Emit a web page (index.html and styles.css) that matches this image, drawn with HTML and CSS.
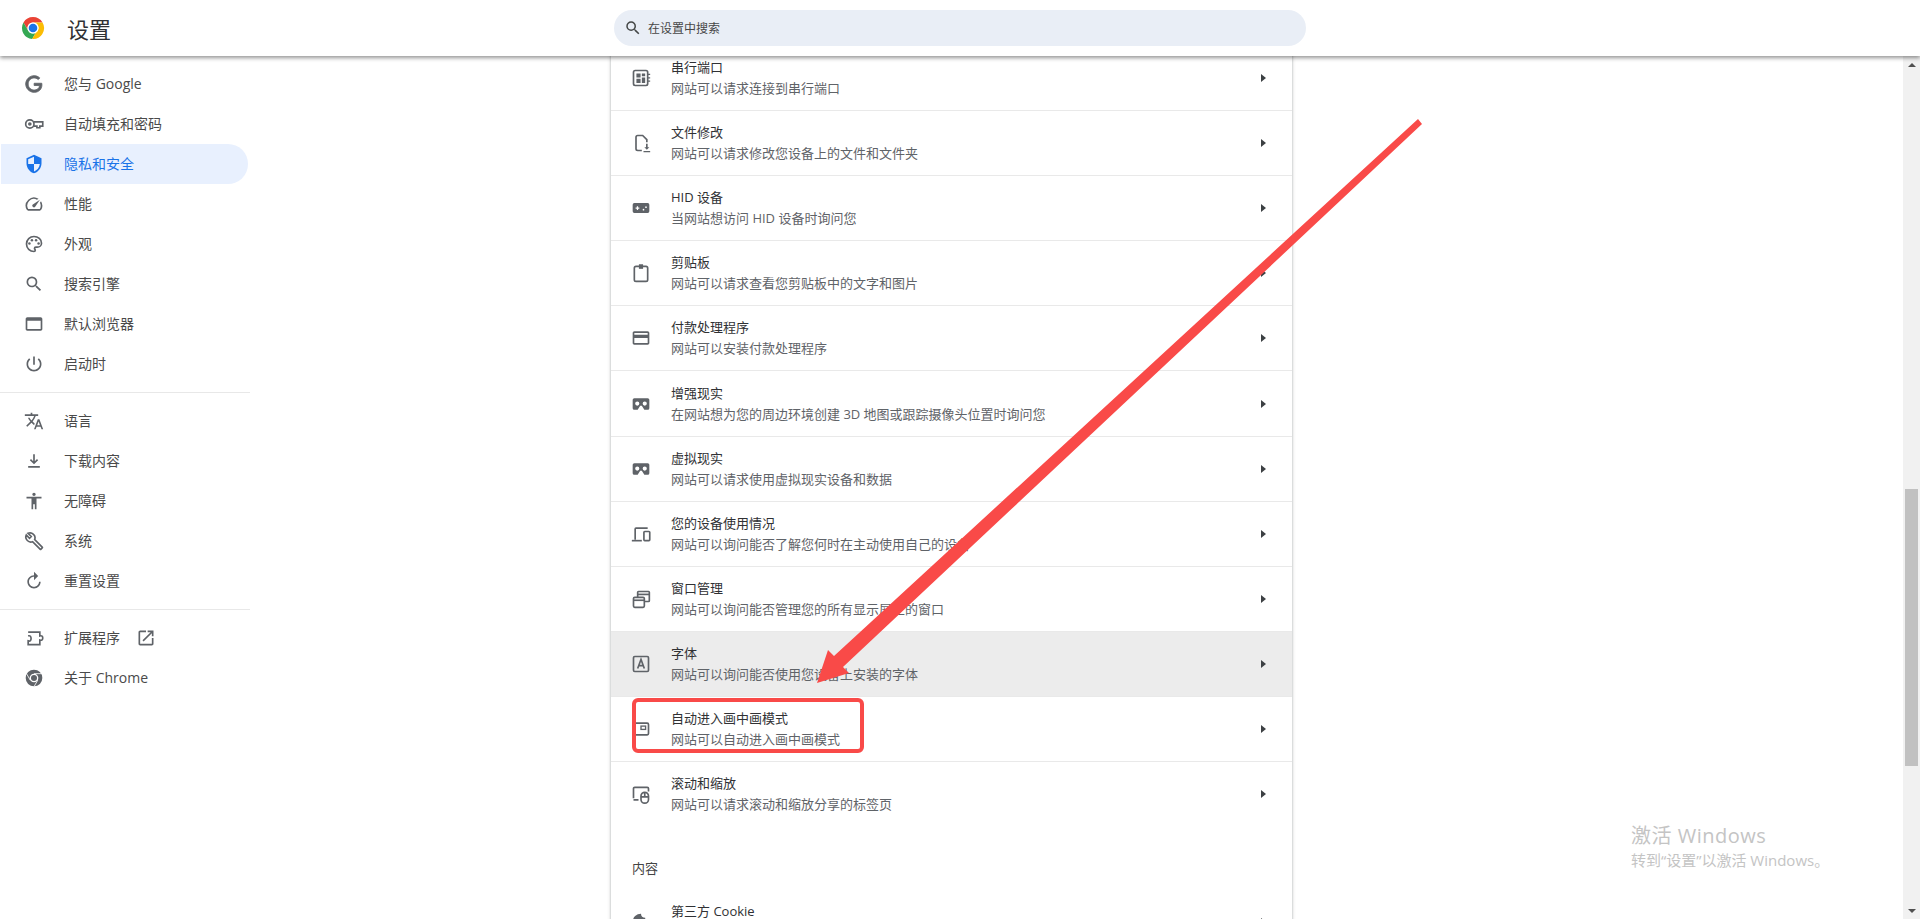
FILE: index.html
```html
<!DOCTYPE html>
<html lang="zh-CN">
<head>
  <meta charset="UTF-8" />
  <title>设置</title>
  <link rel="stylesheet" href="styles.css">
</head>
<body>
  <header class="topbar">
    <div class="brand">
      <svg class="logo" viewBox="0 0 24 24">
        <path fill="#ea4335" d="M2.47 6.5A11 11 0 0 1 21.53 6.5H12A5.5 5.5 0 0 0 7.24 14.75Z"/>
        <path fill="#34a853" d="M2.47 6.5L7.24 14.75A5.5 5.5 0 0 0 14.76 16.76L11.16 23A11 11 0 0 1 2.47 6.5Z"/>
        <path fill="#fbbc04" d="M21.53 6.5H12A5.5 5.5 0 0 1 14.76 16.76L11.16 23A11 11 0 0 0 21.53 6.5Z"/>
        <circle cx="12" cy="12" r="5.5" fill="#fff"/>
        <circle cx="12" cy="12" r="4.3" fill="#1a73e8"/>
      </svg>
      <h1 class="title">设置</h1>
    </div>
    <div class="search">
      <svg class="search-icon" viewBox="0 0 24 24"><path d="M15.5 14h-.79l-.28-.27A6.471 6.471 0 0 0 16 9.5 6.5 6.5 0 1 0 9.5 16c1.61 0 3.09-.59 4.23-1.57l.27.28v.79l5 4.99L20.49 19l-4.99-5zm-6 0C7.01 14 5 11.99 5 9.5S7.01 5 9.5 5 14 7.01 14 9.5 11.99 14 9.5 14z"/></svg>
      <span>在设置中搜索</span>
    </div>
  </header>

  <div class="layout">
    <nav class="sidebar">
      <a class="nav-item">
        <svg class="icon bold" viewBox="0 0 24 24"><path d="M21.35 11.1h-9.17v2.73h6.51c-.33 3.81-3.5 5.44-6.5 5.44C8.36 19.27 5 16.25 5 12c0-4.1 3.2-7.27 7.2-7.27 3.09 0 4.9 1.97 4.9 1.97L19 4.72S16.56 2 12.1 2C6.42 2 2.03 6.8 2.03 12c0 5.05 4.13 10 10.22 10 5.35 0 9.25-3.67 9.25-9.09 0-1.15-.15-1.81-.15-1.81z"/></svg>
        您与 Google
      </a>
      <a class="nav-item">
        <svg class="icon line" viewBox="0 0 24 24"><circle cx="7" cy="12" r="5"/><circle cx="7" cy="12" r="1.2"/><path d="M12 9.5h10.5v5H19v2h-3.5v-2H12"/></svg>
        自动填充和密码
      </a>
      <a class="nav-item active">
        <svg class="icon" viewBox="0 0 24 24"><path d="M12 1L3 5v6c0 5.55 3.84 10.74 9 12 5.16-1.26 9-6.45 9-12V5l-9-4zm0 10.99h7c-.53 4.12-3.28 7.79-7 8.94V12H5V6.3l7-3.11v8.8z"/></svg>
        隐私和安全
      </a>
      <a class="nav-item">
        <svg class="icon" viewBox="0 0 24 24"><path d="M20.38 8.57l-1.23 1.85a8 8 0 0 1-.22 7.58H5.07A8 8 0 0 1 15.58 6.85l1.85-1.23A10 10 0 0 0 3.35 19a2 2 0 0 0 1.72 1h13.85a2 2 0 0 0 1.74-1 10 10 0 0 0-.27-10.44zm-9.79 6.84a2 2 0 0 0 2.83 0l5.66-8.49-8.49 5.66a2 2 0 0 0 0 2.83z"/></svg>
        性能
      </a>
      <a class="nav-item">
        <svg class="icon" viewBox="0 0 24 24">
          <path class="outline" d="M12 3C7 3 3 7 3 12s4 9 9 9c.9 0 1.5-.6 1.5-1.5 0-1-.9-1.3-.9-2.2 0-.9.7-1.5 1.6-1.5H16c2.8 0 5-2.2 5-4.8C21 6.600 17 3 12 3z"/>
          <circle cx="6.500" cy="11.500" r="1.500"/><circle cx="9.500" cy="7.500" r="1.500"/><circle cx="14.500" cy="7.500" r="1.500"/><circle cx="17.500" cy="11.500" r="1.500"/>
        </svg>
        外观
      </a>
      <a class="nav-item">
        <svg class="icon" viewBox="0 0 24 24"><path d="M15.5 14h-.79l-.28-.27A6.471 6.471 0 0 0 16 9.5 6.5 6.5 0 1 0 9.5 16c1.61 0 3.09-.59 4.23-1.57l.27.28v.79l5 4.99L20.49 19l-4.99-5zm-6 0C7.01 14 5 11.99 5 9.5S7.01 5 9.5 5 14 7.01 14 9.5 11.99 14 9.5 14z"/></svg>
        搜索引擎
      </a>
      <a class="nav-item">
        <svg class="icon" viewBox="0 0 24 24"><path d="M4 4h16c1.100 0 2 .9 2 2v12c0 1.100-.9 2-2 2H4c-1.100 0-2-.9-2-2V6c0-1.100.9-2 2-2zm0 4v10h16V8H4z"/></svg>
        默认浏览器
      </a>
      <a class="nav-item">
        <svg class="icon" viewBox="0 0 24 24"><path d="M13 3h-2v10h2V3zm4.830 2.170l-1.420 1.420C17.990 7.860 19 9.810 19 12c0 3.870-3.130 7-7 7s-7-3.130-7-7c0-2.190 1.010-4.140 2.580-5.420L6.170 5.170C4.230 6.820 3 9.260 3 12c0 4.970 4.030 9 9 9s9-4.030 9-9c0-2.740-1.230-5.180-3.170-6.830z"/></svg>
        启动时
      </a>
      <hr class="nav-rule">
      <a class="nav-item">
        <svg class="icon" viewBox="0 0 24 24"><path d="M12.870 15.070l-2.540-2.510.03-.03c1.740-1.940 2.980-4.170 3.710-6.530H17V4h-7V2H8v2H1v1.990h11.170C11.500 7.920 10.440 9.750 9 11.350 8.070 10.320 7.300 9.190 6.690 8h-2c.73 1.630 1.730 3.170 2.980 4.560l-5.090 5.020L4 19l5-5 3.110 3.110.76-2.040zM18.500 10h-2L12 22h2l1.120-3h4.750L21 22h2l-4.500-12zm-2.620 7l1.620-4.330L19.120 17h-3.240z"/></svg>
        语言
      </a>
      <a class="nav-item">
        <svg class="icon" viewBox="0 0 24 24"><path d="M12 16l-5-5 1.410-1.410L11 12.170V4h2v8.170l2.590-2.580L17 11l-5 5zM5 18h14v2H5z"/></svg>
        下载内容
      </a>
      <a class="nav-item">
        <svg class="icon" viewBox="0 0 24 24"><path d="M12 2c1.100 0 2 .9 2 2s-.9 2-2 2-2-.9-2-2 .9-2 2-2zm9 7h-6v13h-2v-6h-2v6H9V9H3V7h18v2z"/></svg>
        无障碍
      </a>
      <a class="nav-item">
        <svg class="icon line" viewBox="0 0 24 24"><path d="M21.800 19.300l-9-9c.8-2.100.4-4.600-1.400-6.300-1.800-1.800-4.400-2.200-6.600-1.300L8.700 6.600 6.600 8.700 2.700 4.800c-1 2.200-.5 4.800 1.300 6.600 1.700 1.700 4.200 2.200 6.300 1.400l9 9c.3.3.8.3 1.100 0l1.400-1.400c.3-.3.3-.8 0-1.100z"/></svg>
        系统
      </a>
      <a class="nav-item">
        <svg class="icon" viewBox="0 0 24 24"><path d="M12 5V1l5 5-5 5V7c-3.310 0-6 2.690-6 6s2.690 6 6 6 6-2.690 6-6h2c0 4.420-3.580 8-8 8s-8-3.580-8-8 3.580-8 8-8z"/></svg>
        重置设置
      </a>
      <hr class="nav-rule">
      <a class="nav-item">
        <svg class="icon line" viewBox="0 0 24 24"><path d="M5 5h14v4.500c2.500-.8 3.500.8 3.500 2.500s-1 3.300-3.500 2.500V20H5v-4.500c2.500.8 3.500-.8 3.500-3S7.500 8.700 5 9.500"/></svg>
        扩展程序
        <svg class="icon external" viewBox="0 0 24 24"><path d="M19 19H5V5h7V3H5c-1.110 0-2 .9-2 2v14c0 1.100.89 2 2 2h14c1.100 0 2-.9 2-2v-7h-2v7zM14 3v2h3.590l-9.830 9.830 1.410 1.410L19 6.410V10h2V3h-7z"/></svg>
      </a>
      <a class="nav-item">
        <svg class="icon" viewBox="0 0 24 24">
          <circle cx="12" cy="12" r="10"/>
          <circle cx="12" cy="12" r="5.200" fill="#fff"/>
          <circle cx="12" cy="12" r="3.600"/>
          <path class="cut" d="M12 6.800h9M16.500 14.600l-4.500 7.800M7.500 14.600L3 6.800"/>
        </svg>
        关于 Chrome
      </a>
    </nav>

    <main class="content">
      <section class="card">
        <div class="row">
          <svg class="icon line" viewBox="0 0 24 24"><rect x="3" y="3" width="17" height="18" rx="2"/><path class="solid" d="M6.500 6.500h5v5h-5zM13 6.500h4V10h-4zM6.500 13h5v5h-5zM13 11.500h4V18h-4zM20 7h3v1.500h-3zM20 11h3v1.500h-3zM20 15h3v1.500h-3z"/></svg>
          <div class="row-text"><div class="row-name">串行端口</div><div class="row-desc">网站可以请求连接到串行端口</div></div>
          <span class="chevron"></span>
        </div>
        <div class="row">
          <svg class="icon line" viewBox="0 0 24 24"><path d="M13 21H8a2 2 0 0 1-2-2V5a2 2 0 0 1 2-2h6l5 5v3"/><path class="solid" d="M18 13h2v4h2l-3 3-3-3h2zM15 21.500h8V23h-8z"/></svg>
          <div class="row-text"><div class="row-name">文件修改</div><div class="row-desc">网站可以请求修改您设备上的文件和文件夹</div></div>
          <span class="chevron"></span>
        </div>
        <div class="row">
          <svg class="icon" viewBox="0 0 24 24"><path fill-rule="evenodd" d="M4 6h16a2 2 0 0 1 2 2v8a2 2 0 0 1-2 2H4a2 2 0 0 1-2-2V8a2 2 0 0 1 2-2zm3 4v1.500H5.500v1.500H7v1.500h1.500V13H10v-1.500H8.500V10zm8 3a1 1 0 1 0 0 2 1 1 0 0 0 0-2zm3-3a1 1 0 1 0 0 2 1 1 0 0 0 0-2z"/></svg>
          <div class="row-text"><div class="row-name">HID 设备</div><div class="row-desc">当网站想访问 HID 设备时询问您</div></div>
          <span class="chevron"></span>
        </div>
        <div class="row">
          <svg class="icon line" viewBox="0 0 24 24"><rect x="4" y="4" width="16" height="18" rx="2"/><path class="solid" d="M9.500 1.500h5V7h-5z"/></svg>
          <div class="row-text"><div class="row-name">剪贴板</div><div class="row-desc">网站可以请求查看您剪贴板中的文字和图片</div></div>
          <span class="chevron"></span>
        </div>
        <div class="row">
          <svg class="icon" viewBox="0 0 24 24"><path d="M20 4H4c-1.110 0-1.990.89-1.990 2L2 18c0 1.110.89 2 2 2h16c1.110 0 2-.89 2-2V6c0-1.110-.89-2-2-2zm0 14H4v-6h16v6zm0-10H4V6h16v2z"/></svg>
          <div class="row-text"><div class="row-name">付款处理程序</div><div class="row-desc">网站可以安装付款处理程序</div></div>
          <span class="chevron"></span>
        </div>
        <div class="row">
          <svg class="icon" viewBox="0 0 24 24"><path fill-rule="evenodd" d="M4 5h16a2 2 0 0 1 2 2v10a2 2 0 0 1-2 2h-4l-3-5h-2l-3 5H4a2 2 0 0 1-2-2V7a2 2 0 0 1 2-2zm3.500 4a2.500 2.500 0 1 0 0 5 2.500 2.500 0 0 0 0-5zm9 0a2.500 2.500 0 1 0 0 5 2.500 2.500 0 0 0 0-5z"/></svg>
          <div class="row-text"><div class="row-name">增强现实</div><div class="row-desc">在网站想为您的周边环境创建 3D 地图或跟踪摄像头位置时询问您</div></div>
          <span class="chevron"></span>
        </div>
        <div class="row">
          <svg class="icon" viewBox="0 0 24 24"><path fill-rule="evenodd" d="M4 5h16a2 2 0 0 1 2 2v10a2 2 0 0 1-2 2h-4l-3-5h-2l-3 5H4a2 2 0 0 1-2-2V7a2 2 0 0 1 2-2zm3.500 4a2.500 2.500 0 1 0 0 5 2.500 2.500 0 0 0 0-5zm9 0a2.500 2.500 0 1 0 0 5 2.500 2.500 0 0 0 0-5z"/></svg>
          <div class="row-text"><div class="row-name">虚拟现实</div><div class="row-desc">网站可以请求使用虚拟现实设备和数据</div></div>
          <span class="chevron"></span>
        </div>
        <div class="row">
          <svg class="icon line" viewBox="0 0 24 24"><path d="M20 5H6a1 1 0 0 0-1 1v13"/><path d="M1 20h12"/><rect x="15.500" y="9" width="7" height="11" rx="1"/></svg>
          <div class="row-text"><div class="row-name">您的设备使用情况</div><div class="row-desc">网站可以询问能否了解您何时在主动使用自己的设备</div></div>
          <span class="chevron"></span>
        </div>
        <div class="row">
          <svg class="icon line" viewBox="0 0 24 24"><rect x="3" y="10" width="13" height="12" rx="1.500"/><path d="M3 13.500h13"/><path d="M8 10V4a1 1 0 0 1 1-1h12a1 1 0 0 1 1 1v10a1 1 0 0 1-1 1h-5"/><path d="M8 6.500h14"/></svg>
          <div class="row-text"><div class="row-name">窗口管理</div><div class="row-desc">网站可以询问能否管理您的所有显示屏上的窗口</div></div>
          <span class="chevron"></span>
        </div>
        <div class="row hovered">
          <svg class="icon line" viewBox="0 0 24 24"><rect x="3" y="3" width="18" height="18" rx="1.500"/><path d="M8 17.500L12 6.500l4 11M9.300 14h5.400"/></svg>
          <div class="row-text"><div class="row-name">字体</div><div class="row-desc">网站可以询问能否使用您设备上安装的字体</div></div>
          <span class="chevron"></span>
        </div>
        <div class="row">
          <svg class="icon line" viewBox="0 0 24 24"><rect x="3" y="5" width="18" height="14" rx="1.500"/><rect class="thin" x="12" y="8.500" width="5.500" height="4"/></svg>
          <div class="row-text"><div class="row-name">自动进入画中画模式</div><div class="row-desc">网站可以自动进入画中画模式</div></div>
          <span class="chevron"></span>
        </div>
        <div class="row">
          <svg class="icon line" viewBox="0 0 24 24"><path d="M3 17V5.500A1.500 1.500 0 0 1 4.500 4h15A1.500 1.500 0 0 1 21 5.500V9M3 19h6"/><rect x="12" y="10" width="9" height="13" rx="4.500"/><path d="M12 15.500h9M16.500 10v5.500"/></svg>
          <div class="row-text"><div class="row-name">滚动和缩放</div><div class="row-desc">网站可以请求滚动和缩放分享的标签页</div></div>
          <span class="chevron"></span>
        </div>
        <h2 class="section-title">内容</h2>
        <div class="row">
          <svg class="icon" viewBox="0 0 24 24"><path d="M12 2a10 10 0 1 0 10 10c-3 0-5-2-5-5-3 0-5-2-5-5z"/></svg>
          <div class="row-text name-only"><div class="row-name">第三方 Cookie</div></div>
          <span class="chevron"></span>
        </div>
      </section>
    </main>

    <div class="scrollbar">
      <span class="scroll-up"></span>
      <div class="thumb"></div>
      <span class="scroll-down"></span>
    </div>
  </div>

  <div class="watermark">
    <div class="wm-title">激活 Windows</div>
    <div class="wm-sub">转到“设置”以激活 Windows。</div>
  </div>

  <!-- annotation drawn on top of the screenshot -->
  <svg class="mark-arrow" viewBox="0 0 1920 919">
    <polygon points="1418,119 1422,124 843,667 849,673 817,683 828,650 834,656"/>
  </svg>
  <div class="mark-box"></div>
</body>
</html>
```
FILE: styles.css
```css
* {
  box-sizing: border-box;
}

html, body {
  margin: 0;
  height: 100%;
  overflow: hidden;
}

body {
  position: relative;
  display: flex;
  flex-direction: column;
  background: #fff;
  color: #303134;
  font-family: "Open Sans", "Noto Sans CJK SC", sans-serif;
  font-size: 13px;
}

.topbar {
  position: relative;
  z-index: 2;
  display: grid;
  grid-template-columns: 1fr 692px 1fr;
  align-items: center;
  flex: none;
  height: 56px;
  background: #fff;
  box-shadow: 0 2px 4px rgba(0, 0, 0, 0.42);
}

.brand {
  display: flex;
  align-items: center;
  padding-left: 21px;
}

.logo {
  width: 24px;
  height: 24px;
}

.title {
  margin: 2px 0 0 22px;
  font-size: 22px;
  font-weight: 400;
  line-height: 1;
}

.search {
  display: flex;
  align-items: center;
  height: 36px;
  padding-left: 10px;
  border-radius: 18px;
  background: #e9eef6;
  color: #474747;
  font-size: 12px;
}

.search-icon {
  width: 18px;
  height: 18px;
  margin-right: 6px;
  fill: #444746;
}

.layout {
  display: flex;
  flex: 1;
  min-height: 0;
}

.sidebar {
  flex: none;
  width: 250px;
  padding-top: 8px;
}

.nav-item {
  display: flex;
  align-items: center;
  height: 40px;
  margin-left: 1px;
  width: 247px;
  padding: 0 0 2px 23px;
  border-radius: 0 20px 20px 0;
  color: #4a4a4a;
  font-size: 14px;
}

.nav-item.active {
  background: #e8f0fe;
  color: #1a73e8;
}

.nav-rule {
  height: 1px;
  margin: 8px 0;
  border: 0;
  background: #e8e8e8;
}

.icon {
  flex: none;
  width: 20px;
  height: 20px;
  margin-right: 20px;
  fill: #5f6368;
}

.nav-item .icon {
  margin-top: 2px;
}

.active .icon {
  fill: #1a73e8;
}

.icon.bold {
  stroke: #5f6368;
  stroke-width: 1;
}

.icon.line {
  fill: none;
  stroke: #5f6368;
  stroke-width: 2;
}

.icon .solid {
  fill: #5f6368;
  stroke: none;
}

.icon .thin {
  stroke-width: 1.600;
}

.icon .outline {
  fill: none;
  stroke: #5f6368;
  stroke-width: 2;
}

.icon .cut {
  fill: none;
  stroke: #fff;
  stroke-width: 1;
}

.nav-item .icon.external {
  margin: 2px 0 0 16px;
}

.content {
  flex: 1;
  min-width: 0;
  overflow: hidden;
}

/* scrolled down, so the card starts above the bar */
.card {
  width: 681px;
  margin: -11px 0 0 361px;
  background: #fff;
  box-shadow: 0 1px 2px rgba(60, 64, 67, 0.3), 0 1px 3px 1px rgba(60, 64, 67, 0.15);
}

.row {
  display: flex;
  align-items: center;
  height: 65.1px;
  padding-left: 20px;
  border-top: 1px solid #e9e9e9;
}

.row:first-child,
.section-title + .row {
  border-top: 0;
}

.row.hovered {
  background: #ececec;
}

.row-text {
  flex: 1;
}

/* second line of this row is below the fold */
.row-text.name-only {
  margin-bottom: 20px;
}

.row-name {
  margin-bottom: 2px;
  line-height: 18px;
}

.row-desc {
  color: #5f6368;
  line-height: 20px;
}

.chevron {
  width: 0;
  height: 0;
  margin-right: 26px;
  border-left: 5px solid #3c4043;
  border-top: 4.500px solid transparent;
  border-bottom: 4.500px solid transparent;
}

.section-title {
  margin: 0;
  padding: 32px 0 11px 21px;
  color: #444;
  font-size: 13px;
  font-weight: 400;
  line-height: 20px;
}

.scrollbar {
  position: relative;
  flex: none;
  width: 17px;
  padding: 433px 2px 0;
  background: #f1f1f1;
}

.thumb {
  height: 277px;
  background: #c1c1c1;
}

.scroll-up,
.scroll-down {
  position: absolute;
  right: 4px;
  border-left: 4.500px solid transparent;
  border-right: 4.500px solid transparent;
}

.scroll-up {
  top: 7px;
  border-bottom: 4px solid #505050;
}

.scroll-down {
  bottom: 6px;
  border-top: 4px solid #505050;
}

.watermark {
  position: absolute;
  left: 1631px;
  top: 822px;
  color: #c4c4c4;
  pointer-events: none;
}

.wm-title {
  font-size: 20px;
  line-height: 28px;
  letter-spacing: 0.5px;
}

.wm-sub {
  font-size: 15px;
  line-height: 20px;
}

.mark-arrow {
  position: absolute;
  left: 0;
  top: 0;
  z-index: 3;
  width: 1920px;
  height: 919px;
  fill: #f94a48;
  pointer-events: none;
}

.mark-box {
  position: absolute;
  left: 632px;
  top: 698px;
  z-index: 3;
  width: 232px;
  height: 55px;
  border: 4px solid #f94a48;
  border-radius: 6px;
}
```
